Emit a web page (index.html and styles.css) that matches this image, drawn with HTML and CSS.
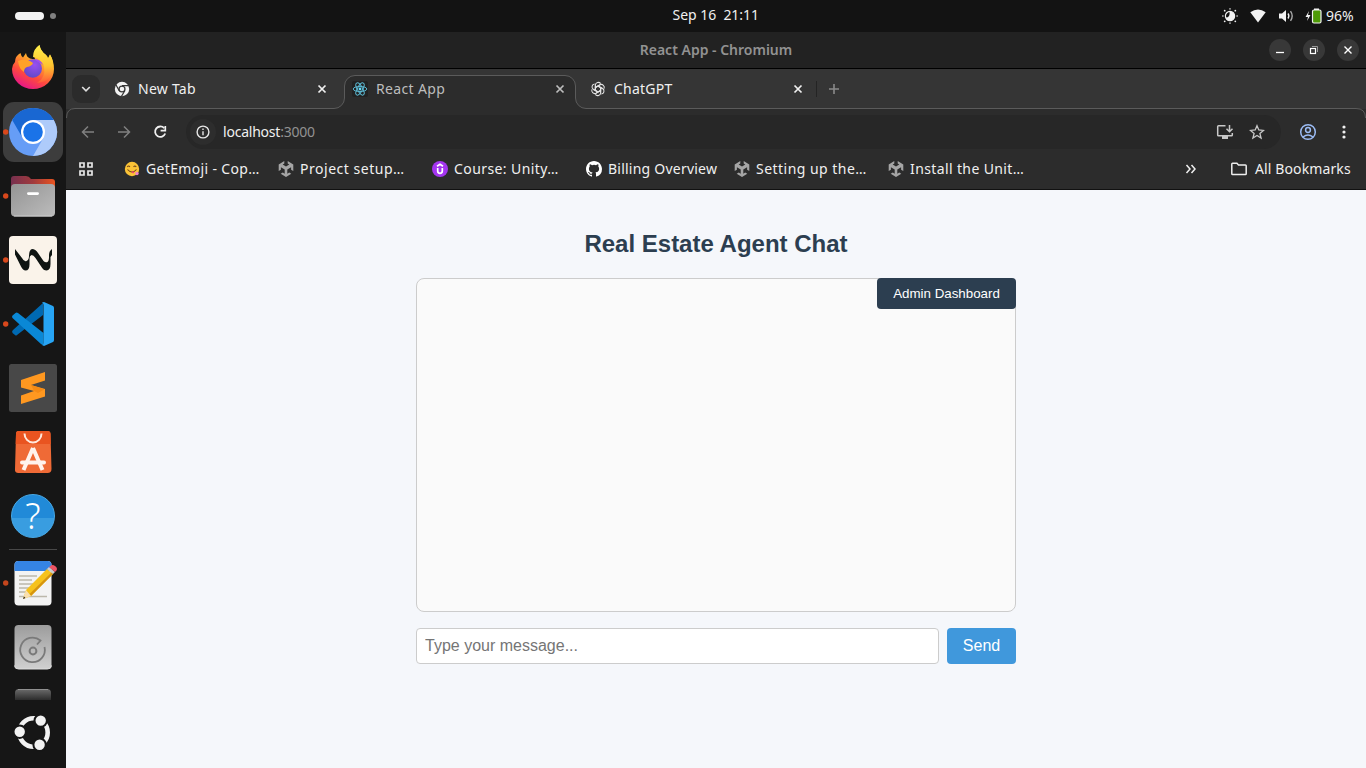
FILE: index.html
```html
<!DOCTYPE html>
<html lang="en">
<head>
<meta charset="utf-8">
<title>React App</title>
<link rel="stylesheet" href="styles.css">
</head>
<body>
<svg class="defs" width="0" height="0">
  <defs>
    <linearGradient id="ff" x1=".8" y1="0" x2=".3" y2="1"><stop offset="0" stop-color="#fff14a"/><stop offset=".4" stop-color="#ffa62b"/><stop offset=".7" stop-color="#ff4a3d"/><stop offset="1" stop-color="#e5148c"/></linearGradient>
    <linearGradient id="ffy" x1="0" y1="0" x2="0" y2="1"><stop offset="0" stop-color="#fff04a"/><stop offset=".55" stop-color="#ffc32f"/><stop offset="1" stop-color="#ff5a3a"/></linearGradient>
    <radialGradient id="ffp" cx=".6" cy=".3" r=".8"><stop offset="0" stop-color="#9a4ff0"/><stop offset="1" stop-color="#5a48c4"/></radialGradient>
    <linearGradient id="fg" x1="0" y1="0" x2="1" y2="1"><stop offset="0" stop-color="#949494"/><stop offset="1" stop-color="#bcbcbc"/></linearGradient>
    <linearGradient id="fb" x1="0" y1="0" x2="1" y2="0"><stop offset="0" stop-color="#77304f"/><stop offset=".5" stop-color="#a03a3d"/><stop offset="1" stop-color="#ea5420"/></linearGradient>
    <linearGradient id="dk" x1="0" y1="0" x2="0" y2="1"><stop offset="0" stop-color="#9c9c9c"/><stop offset="1" stop-color="#d0d0d0"/></linearGradient>
    <linearGradient id="cut" x1="0" y1="0" x2="0" y2="1"><stop offset="0" stop-color="#6c6c6c"/><stop offset="1" stop-color="#2c2c2c"/></linearGradient>
    <symbol id="unity" viewBox="0 0 16 16"><path fill="#a5a5a5" d="M6.300 0v2.500L4.700 3.600 8 5.600l3.300-2L9.700 2.500V0l5.600 3.400v6.500l-2.200-1.200V6.300L9.300 8.500v4.200l1.900-1.100 2.100 1.200L8 16l-5.300-3.200 2.100-1.200 1.900 1.100V8.500L2.900 6.300v2.400L.7 9.900V3.400z"/></symbol>
    <symbol id="close" viewBox="0 0 10 10"><path d="M1.500 1.500l7 7M8.500 1.500l-7 7" stroke="currentColor" stroke-width="1.700" fill="none"/></symbol>
  </defs>
</svg>
<div class="desktop">
  <header class="topbar">
    <div class="workspaces"><span class="pill"></span><span class="wdot"></span></div>
    <div class="clock">Sep 16&nbsp; 21:11</div>
    <div class="status">
      <svg width="16" height="16" viewBox="0 0 16 16"><circle cx="8" cy="8" r="4.600" fill="none" stroke="#f2f2f2" stroke-width="1.200"/><path d="M7.500 3.500A4.600 4.600 0 1 1 3.700 9.500Q8.500 9.500 7.500 3.500z" fill="#f2f2f2"/><g fill="#999"><rect x="7.200" width="1.600" height="1.700"/><rect x="7.200" y="14.300" width="1.600" height="1.700"/><rect y="7.200" width="1.700" height="1.600"/><rect x="14.300" y="7.200" width="1.700" height="1.600"/></g><g fill="#eee"><circle cx="2.700" cy="2.700" r=".9"/><circle cx="13.300" cy="2.700" r=".9"/><circle cx="2.700" cy="13.300" r=".9"/><circle cx="13.300" cy="13.300" r=".9"/></g></svg>
      <svg class="wifi" width="16" height="16" viewBox="0 0 16 16"><path d="M.3 4.200Q8-1 15.700 4.200L8 14.500z" fill="#f2f2f2"/></svg>
      <svg class="vol" width="16" height="16" viewBox="0 0 16 16"><path d="M1 5.500h3L8 2v12l-4-3.500H1z" fill="#f2f2f2"/><path d="M10 5.500q1.800 2.500 0 5" stroke="#f2f2f2" stroke-width="1.300" fill="none"/><path d="M12.500 3.200q3.400 4.800 0 9.600" stroke="#aaa" stroke-width="1.400" fill="none"/></svg>
      <svg class="batt" width="17" height="16" viewBox="0 0 17 16"><path d="M4 3L.5 9H3L2 13l3.500-6H3z" fill="#f2f2f2"/><path d="M9 .5h5v2H9z" fill="#f2f2f2"/><rect x="7.500" y="2" width="8.500" height="13" rx="1.500" fill="#4e9a06" stroke="#f2f2f2" stroke-width="1.200"/></svg>
      <span class="pct">96%</span>
    </div>
  </header>
  <div class="body">
    <nav class="dock">
      <svg class="item" viewBox="0 0 66 64"><path fill="url(#ff)" d="M15 26q0-6 5.500-9 .5 3 2.500 4.500l3-4.500q.5 4 4 5.500l5 1Q32 15 39.500 9q1 6 6 9.500 2 1.500 2.500 4l2-4Q54 25 54 33a21 20 0 0 1-42 0q0-4 3-7z"/><path fill="url(#ffy)" d="M39.500 9q1 6 6 9.500 2 1.500 2.500 4l2-4Q54 25 53 34q-3 12-16 13 9-5 7-17-1-4-4-5-1-3-7-4Q33 13 39.500 9z"/><circle cx="32.800" cy="32.500" r="9.200" fill="url(#ffp)"/><path d="M18 25q8-4 15 2-1 3-6 4-3 1-3 5-5-3-6-11z" fill="#ffa229"/><path d="M34 23q7 0 9 6-2-2-5-3z" fill="#a04cf0"/></svg>
      <svg class="item" viewBox="0 0 66 64"><rect x="3" y="2" width="60" height="60" rx="11" fill="#3d3d3d"/><circle cx="5.700" cy="32" r="2.700" fill="#d9481c"/><circle cx="33" cy="32" r="24" fill="#669df6"/><path d="M33 32V20h20.800A24 24 0 0 1 33 56l10.400-18z" fill="#aecbfa"/><path d="M12.200 20a24 24 0 0 1 41.600 0H33L22.600 38z" fill="#1967d2"/><circle cx="33" cy="32" r="12" fill="#fff"/><circle cx="33" cy="32" r="9.800" fill="#1a73e8"/></svg>
      <svg class="item" viewBox="0 0 66 64"><circle cx="5.700" cy="32" r="2.700" fill="#d9481c"/><path d="M11 28V15q0-3 3-3h12q3 0 5 3h21q3 0 3 3v12z" fill="url(#fb)"/><rect x="11" y="20" width="44" height="32.500" rx="4" fill="url(#fg)"/><path d="M14 52h38" stroke="#ccc"/><rect x="27" y="28.200" width="12" height="2.800" rx="1.400" fill="#fff"/></svg>
      <svg class="item" viewBox="0 0 66 64"><circle cx="5.700" cy="32" r="2.700" fill="#d9481c"/><rect x="9" y="8" width="48" height="48" rx="4" fill="#faf3ea"/><path d="M15 21l7 9q2 4 4.500 3 2.500-1 2.500-5 0-6 3-7 3.500 0 6 4l5.500 8q2 2 4 1 1.500-1 1.500-5v-2q0-4 3-6V27l-1.500 2v7q0 6-4 6.500-3 0-5-3.500l-6-9q-2-3-4-3-2 .5-2 3.500v6q0 6-4 6-2.500 0-4.500-4l-6-12z" fill="#0e1412"/></svg>
      <svg class="item" viewBox="0 0 66 64"><circle cx="5.700" cy="32" r="2.700" fill="#d9481c"/><path d="M12.500 41q-1-2 .5-3l30-27v12L17 43q-1 1-2 0z" fill="#0069b2"/><path d="M12.500 23.500l3-2.500q1-1 2.500 0l25.500 20v12q-1.500 0-2.500-1L12.500 26q-1-1.500 0-2.500z" fill="#0a88d6"/><path d="M42 10.500l2-.5 9 4q1 .5 1 2v32q0 1.500-1 2l-9 4-2-1q1.500 0 1.500-2V13q0-2-1.500-2.500z" fill="#27a5f5"/></svg>
      <svg class="item" viewBox="0 0 66 64"><rect x="9" y="8" width="48" height="48" rx="2.500" fill="#484848"/><path d="M21 24l24-8v8.500L31 29l14 4v7.500L21 48v-8.500L34 35l-13-3.500z" fill="#ff9820"/><path d="M31 29l13.500 4.200L38 37l-4-2z" fill="#f58a14"/></svg>
      <svg class="item" viewBox="0 0 66 64"><path d="M18.500 11h29q3 0 3 3l1 35q0 4-4 4h-29q-4 0-3.500-4l1-35q0-3 2.500-3z" fill="#ef6a36"/><path d="M18.500 11h29q3 0 3 3l.3 10H15.700l.3-10q0-3 2.500-3z" fill="#e95420"/><path d="M24.500 13.500a8.500 9 0 0 0 17 0" fill="none" stroke="#ffe8dc" stroke-width="2"/><path d="M33 28L23.500 50M33 28l9.500 22" stroke="#fff3ed" stroke-width="4"/><path d="M22 42.500h22" stroke="#fff3ed" stroke-width="4" stroke-linecap="round"/></svg>
      <div class="item help"><span>?</span></div>
      <div class="rule"></div>
      <svg class="item" viewBox="0 0 66 64"><circle cx="5.700" cy="32" r="2.700" fill="#c4461d"/><rect x="14.500" y="10" width="37" height="44.500" rx="4" fill="#f3f3f3"/><path d="M14.500 20v-6q0-4 4-4h29q4 0 4 4v6z" fill="#3584e4"/><path d="M19 25h18M19 29h13M19 33h18M19 37h12M19 41h9M19 45.500h28" stroke="#bcb8ab" stroke-width="1.600"/><path d="M26 39L47 18l6 5-22 22-8 3z" fill="#f6c21c"/><path d="M29.500 43l22-21.500 1.500 1.500-22 22z" fill="#d6950f"/><path d="M26 39l5 6-8 3z" fill="#f9dfb0"/><path d="M24 45.500l1.500 1.500-2.500 1z" fill="#222"/><path d="M47 18l2-2 6 5-2 2z" fill="#ccc"/><path d="M49 16l2-1.500q2-1 4 .5 3 2 1.500 4.500L55 21z" fill="#ee5566"/></svg>
      <svg class="item" viewBox="0 0 66 64"><rect x="14.500" y="10" width="37" height="44" rx="4" fill="url(#dk)"/><path d="M14.500 50.500q0 3.500 4 3.500h29q4 0 4-3.500" fill="none" stroke="#ddd"/><path d="M44.500 32a12.300 12.300 0 1 1-4-6.500l-3.500 4" fill="none" stroke="#7a7a7a" stroke-width="1.800"/><circle cx="33" cy="36" r="3.400" fill="none" stroke="#7a7a7a" stroke-width="2"/></svg>
      <svg class="partial" viewBox="0 0 66 21"><path d="M15 21v-7q0-4 4-4h28q4 0 4 4v7z" fill="url(#cut)"/><path d="M18 10.500h30" stroke="#909090"/></svg>
      <svg class="launcher" viewBox="0 0 66 68"><circle cx="33.500" cy="32.500" r="14.200" fill="none" stroke="#f2f2f2" stroke-width="4.600"/><g fill="#f2f2f2" stroke="#161616" stroke-width="2"><circle cx="40.700" cy="20.600" r="6.200"/><circle cx="19.700" cy="31.700" r="6.200"/><circle cx="39.600" cy="44.700" r="6.200"/></g></svg>
    </nav>
    <main class="window">
      <div class="titlebar"><span class="wtitle">React App - Chromium</span>
        <div class="controls">
          <span><svg width="10" height="10"><path d="M1 7.500h8" stroke="#fff" stroke-width="1.300"/></svg></span>
          <span><svg width="10" height="10"><path d="M3 1.500h5.500V7" stroke="#999" fill="none"/><rect x="1.500" y="3.500" width="5" height="5" stroke="#fff" stroke-width="1.200" fill="none"/></svg></span>
          <span><svg width="10" height="10"><path d="M1.500 1.500l7 7M8.500 1.500l-7 7" stroke="#fff" stroke-width="1.400"/></svg></span>
        </div>
      </div>
      <div class="tabs">
        <svg class="outline" width="1300" height="49" viewBox="0 0 1300 49"><path d="M.5 49Q.5 39.500 9 39.500H268A10.500 10.500 0 0 0 278.500 29V17A10.500 10.500 0 0 1 289 6.500H499A10.500 10.500 0 0 1 509.500 17V29A10.500 10.500 0 0 0 520 39.500H1290Q1299.500 39.500 1299.500 49" fill="#2c2c2c" stroke="#5b5b5b"/></svg>
        <span class="search"><svg width="10" height="8"><path d="M1.200 2L5 5.800 8.800 2" fill="none" stroke="#ddd" stroke-width="1.700"/></svg></span>
        <div class="tab">
          <svg width="16" height="16" viewBox="0 0 16 16"><circle cx="8" cy="8" r="7.200" fill="#f2f2f2"/><circle cx="8" cy="8" r="3.600" fill="#353535"/><circle cx="8" cy="8" r="2.300" fill="#f2f2f2"/><path d="M8 4.700h7M5.200 9.700L1.800 3.500M10.800 9.700L7.300 15.600" stroke="#353535" stroke-width="1.200"/></svg>
          <span class="t-new">New Tab</span><svg class="x" width="10" height="10"><use href="#close"/></svg>
        </div>
        <div class="tab current">
          <svg width="16" height="16" viewBox="0 0 16 16"><rect width="16" height="16" rx="2" fill="#222"/><g fill="none" stroke="#5cb9d3"><ellipse cx="8" cy="8" rx="6.800" ry="2.600"/><ellipse cx="8" cy="8" rx="6.800" ry="2.600" transform="rotate(60 8 8)"/><ellipse cx="8" cy="8" rx="6.800" ry="2.600" transform="rotate(120 8 8)"/></g><circle cx="8" cy="8" r="1.400" fill="#61dafb"/></svg>
          <span class="t-react">React App</span><svg class="x" width="10" height="10"><use href="#close"/></svg>
        </div>
        <div class="tab">
          <svg width="16" height="16" viewBox="0 0 16 16"><g fill="none" stroke="#e4e4e4" stroke-width="1.050"><path id="petal" d="M5.300 9.600V4.200A3 3 0 0 1 10.700 2.600M5.300 6.600L8 5l4.600 2.700"/><use href="#petal" transform="rotate(60 8 8)"/><use href="#petal" transform="rotate(120 8 8)"/><use href="#petal" transform="rotate(180 8 8)"/><use href="#petal" transform="rotate(240 8 8)"/><use href="#petal" transform="rotate(300 8 8)"/></g></svg>
          <span class="t-gpt">ChatGPT</span><svg class="x" width="10" height="10"><use href="#close"/></svg>
        </div>
        <span class="divider"></span>
        <svg class="plus" width="12" height="12"><path d="M6 1v10M1 6h10" stroke="#8a8a8a" stroke-width="1.600"/></svg>
      </div>
      <div class="toolbar">
        <svg width="14" height="14"><path d="M13 7H2M7 1.500L1.500 7 7 12.500" fill="none" stroke="#808080" stroke-width="1.500"/></svg>
        <svg class="fwd" width="14" height="14"><path d="M1 7h11M7 1.500L12.500 7 7 12.500" fill="none" stroke="#808080" stroke-width="1.500"/></svg>
        <svg class="reload" width="14" height="14"><path d="M11.200 3.200A5.200 5.200 0 1 0 12.200 8.500" fill="none" stroke="#f0f0f0" stroke-width="1.800"/><path d="M12.300 1v4.700H7.600" fill="none" stroke="#f0f0f0" stroke-width="1.700"/></svg>
        <div class="omnibox">
          <span class="info"><svg width="14" height="14"><circle cx="7" cy="7" r="5.900" fill="none" stroke="#e8e8e8" stroke-width="1.400"/><path d="M7 6.200v4M7 3.500v1.500" stroke="#e8e8e8" stroke-width="1.400"/></svg></span>
          <span class="url">localhost<span class="port">:3000</span></span>
          <svg class="install" width="18" height="16"><path d="M9.500 1.700H2.500q-.8 0-.8.800v8.500q0 .8.800.8h13q.8 0 .8-.8V9" fill="none" stroke="#c8c8c8" stroke-width="1.500"/><path d="M6 12h6v3H6z" fill="#c8c8c8"/><path d="M13.500 1v6.500M10.500 4.800l3 3 3-3" fill="none" stroke="#c8c8c8" stroke-width="1.500"/></svg>
          <svg width="16" height="16"><path d="M8 1.700l1.800 4.300 4.700.4-3.600 3 1.200 4.600L8 11.500 3.900 14l1.200-4.600-3.600-3 4.700-.4z" fill="none" stroke="#c8c8c8" stroke-width="1.300"/></svg>
        </div>
        <svg class="user" width="18" height="18"><g fill="none" stroke="#9cbcf5" stroke-width="1.500"><circle cx="9" cy="9" r="7.300"/><circle cx="9" cy="7" r="2.400"/><path d="M4 14q5-4 10 0"/></g></svg>
        <svg class="kebab" width="4" height="16"><g fill="#f0f0f0"><circle cx="2" cy="3" r="1.600"/><circle cx="2" cy="8" r="1.600"/><circle cx="2" cy="13" r="1.600"/></g></svg>
      </div>
      <div class="bookmarks">
        <svg width="14" height="14"><g fill="none" stroke="#e8e8e8" stroke-width="1.700"><path d="M1 1h4v4H1zM9 1h4v4H9zM1 9h4v4H1zM9 9h4v4H9z"/></g></svg>
        <div class="bm b1"><svg width="16" height="16"><circle cx="8" cy="8" r="7.200" fill="#fbc337"/><path d="M3.300 6q1.300-2 2.600 0M9.600 6q1.300-2 2.600 0M3.500 8.500q4.500 5 9 0" fill="none" stroke="#70451b" stroke-width="1.100"/><path d="M7.500 10.800q1.500-1 2.500 0 .5 1.500-.8 1.500-1.500 0-1.700-1.500z" fill="#f04770"/><circle cx="13" cy="12.500" r="1.700" fill="#ef83c5"/></svg><span>GetEmoji - Cop…</span></div>
        <div class="bm b2"><svg width="16" height="16"><use href="#unity"/></svg><span>Project setup…</span></div>
        <div class="bm b3"><svg width="16" height="16"><circle cx="8" cy="8" r="8" fill="#a435f0"/><path d="M5.700 7v3q0 2.300 2.300 2.300t2.300-2.300V7M5 5.200l3-1.900 3 1.900" stroke="#fff" stroke-width="1.700" fill="none"/></svg><span>Course: Unity…</span></div>
        <div class="bm b4"><svg width="16" height="16" viewBox="0 0 16 16"><path fill="#fff" d="M8 0C3.580 0 0 3.580 0 8c0 3.540 2.290 6.530 5.470 7.590.4.070.55-.17.55-.38 0-.19-.01-.82-.01-1.490-2.010.37-2.530-.49-2.690-.94-.09-.23-.48-.94-.82-1.130-.28-.15-.68-.52-.01-.53.63-.01 1.080.58 1.230.82.72 1.210 1.870.87 2.330.66.07-.52.28-.87.51-1.070-1.780-.2-3.640-.89-3.640-3.950 0-.87.31-1.590.82-2.150-.08-.2-.36-1.020.08-2.120 0 0 .67-.21 2.200.82a7.400 7.400 0 0 1 4 0c1.530-1.040 2.200-.82 2.200-.82.44 1.100.16 1.920.08 2.120.51.56.82 1.270.82 2.150 0 3.070-1.870 3.750-3.650 3.950.29.25.54.73.54 1.480 0 1.070-.01 1.930-.01 2.200 0 .21.15.46.55.38A8 8 0 0 0 16 8c0-4.420-3.580-8-8-8z"/></svg><span>Billing Overview</span></div>
        <div class="bm b5"><svg width="16" height="16"><use href="#unity"/></svg><span>Setting up the…</span></div>
        <div class="bm b6"><svg width="16" height="16"><use href="#unity"/></svg><span>Install the Unit…</span></div>
        <svg class="more" width="12" height="10"><path d="M1.500 1L5 5 1.500 9M6.500 1L10 5 6.500 9" fill="none" stroke="#eee" stroke-width="1.500"/></svg>
        <div class="bm b7"><svg width="16" height="16"><path d="M.8 3q0-.8.800-.8h4.300L7.500 4h6.900q.8 0 .8.800v7.900q0 .8-.8.800H1.600q-.8 0-.8-.8z" fill="none" stroke="#eee" stroke-width="1.500"/></svg><span>All Bookmarks</span></div>
      </div>
      <section class="page">
        <div class="chat">
          <h2>Real Estate Agent Chat</h2>
          <div class="messages"><button class="admin">Admin Dashboard</button></div>
          <form class="compose"><input type="text" placeholder="Type your message..."><button type="button" class="send">Send</button></form>
        </div>
      </section>
    </main>
  </div>
</div>
</body>
</html>
```
FILE: styles.css
```css
* { box-sizing: border-box; }
body { margin: 0; width: 1366px; height: 768px; overflow: hidden; background: #161616; color: #f0f0f0; font: 14px "Noto Sans", sans-serif; }
svg { flex: none; display: block; }
.defs { position: absolute; }
.desktop { display: flex; flex-direction: column; height: 768px; }
.topbar { height: 32px; background: #131313; display: grid; grid-template-columns: 1fr auto 1fr; align-items: center; flex: none; }
.workspaces { display: flex; align-items: center; gap: 6px; padding-left: 15px; }
.pill { width: 29px; height: 8px; border-radius: 4px; background: #f3f3f3; }
.wdot { width: 6px; height: 6px; border-radius: 50%; background: #808080; }
.clock { width: 87px; white-space: nowrap; margin-left: 66px; padding-bottom: 3px; letter-spacing: -.03px; }
.status { display: flex; align-items: center; justify-content: flex-end; padding-right: 11px; }
.wifi, .vol { margin-left: 12px; }
.batt { margin-left: 11px; margin-right: 4px; }
.pct { width: 29px; padding-bottom: 2px; letter-spacing: -.05px; white-space: nowrap; }
.body { display: flex; flex: 1; min-height: 0; }
.dock { width: 66px; flex: none; padding-top: 4px; display: flex; flex-direction: column; align-items: center; background: #161616; }
.item { width: 66px; height: 64px; flex: none; }
.help { display: flex; align-items: center; justify-content: center; }
.help span { width: 44px; height: 44px; border-radius: 50%; background: linear-gradient(#218ad8 54%, #399de0 54%); border: 1px solid #48a9e6; font-size: 36px; font-weight: 300; line-height: 41px; text-align: center; color: #fff; }
.rule { width: 48px; height: 1px; margin: 1px 0; background: #484848; flex: none; }
.partial { width: 66px; height: 21px; }
.launcher { width: 66px; height: 68px; }
.window { flex: 1; min-width: 0; display: flex; flex-direction: column; background: #2c2c2c; }
.titlebar { height: 37px; flex: none; display: grid; grid-template-columns: 1fr auto 1fr; align-items: center; background: #222; border-bottom: 1px solid #000; }
.wtitle { grid-column: 2; color: #929292; font-weight: 600; padding-bottom: 2px; }
.controls { display: flex; justify-content: flex-end; gap: 12px; padding-right: 7px; }
.controls span { width: 22px; height: 22px; border-radius: 50%; background: #383838; display: grid; place-items: center; }
.tabs { height: 40px; flex: none; position: relative; display: flex; background: #353535; padding: 5px 0 6px 6px; align-items: center; }
.outline { position: absolute; left: 0; top: 0; }
.search { position: relative; width: 28px; height: 28px; border-radius: 9px; background: #2b2b2b; display: grid; place-items: center; }
.tab { position: relative; display: flex; align-items: center; width: 238px; padding: 0 11px 0 14px; gap: 8px; }
.current { color: #bdbdbd; }
.t-new { letter-spacing: .25px; }
.t-react { letter-spacing: .35px; }
.t-gpt { letter-spacing: .22px; }
.x { margin-left: auto; }
.divider { position: relative; width: 1px; height: 16px; background: #242424; margin: 0 11px 0 2px; }
.plus { position: relative; }
.toolbar { position: relative; height: 40px; flex: none; display: flex; align-items: center; padding-left: 15px; padding-top: 6px; }
.fwd { margin-left: 22px; }
.reload { margin-left: 22px; }
.omnibox { width: 1095px; height: 34px; border-radius: 17px; background: #272727; margin-left: 19px; display: flex; align-items: center; padding: 0 16px 0 4px; }
.info { width: 26px; height: 26px; border-radius: 50%; background: #2d2d2d; display: grid; place-items: center; margin-right: 7px; }
.url { letter-spacing: -.22px; padding-bottom: 2px; }
.port { color: #929292; }
.install { margin-left: auto; margin-right: 15px; }
.user { margin-left: 18px; }
.kebab { margin-left: 25px; }
.bookmarks { height: 41px; flex: none; display: flex; align-items: center; padding: 0 0 0 13px; border-bottom: 1px solid #111; }
.bm { display: flex; flex: none; align-items: center; gap: 6px; white-space: nowrap; width: 154px; }
.bm span { padding-bottom: 2px; }
.b1 { margin-left: 31px; letter-spacing: .35px; }
.b2 { letter-spacing: .52px; }
.b3 { letter-spacing: .42px; }
.b4 { width: 148px; letter-spacing: .23px; }
.b5 { letter-spacing: .47px; }
.b6 { letter-spacing: .38px; }
.more { margin-left: 143px; }
.b7 { gap: 8px; width: 121px; margin-left: 34px; letter-spacing: .12px; }
.page { flex: 1; background: #f5f7fb; padding-top: 40px; font-family: "Liberation Sans", Arial, sans-serif; }
.chat { width: 600px; margin: 0 auto; }
h2 { margin: 0 0 20px; font-size: 24px; line-height: 28px; text-align: center; color: #2c3e50; }
.messages { height: 334px; border: 1px solid #ccc; border-radius: 8px; background: #fafafa; position: relative; }
.admin { position: absolute; right: -1px; top: -1px; width: 139px; height: 31px; border: 0; border-radius: 4px; background: #2c3e50; color: #fff; font: 13.333px "Liberation Sans", Arial, sans-serif; padding: 0; }
.compose { display: flex; gap: 8px; margin-top: 16px; height: 36px; }
.compose input { flex: 1; min-width: 0; border: 1px solid #ccc; border-radius: 4px; padding: 0 8px; font: 16px "Liberation Sans", Arial, sans-serif; background: #fff; }
.send { width: 69px; border: 0; border-radius: 4px; background: #4098dc; color: #fff; font: 16px "Liberation Sans", Arial, sans-serif; padding: 0; }
```
